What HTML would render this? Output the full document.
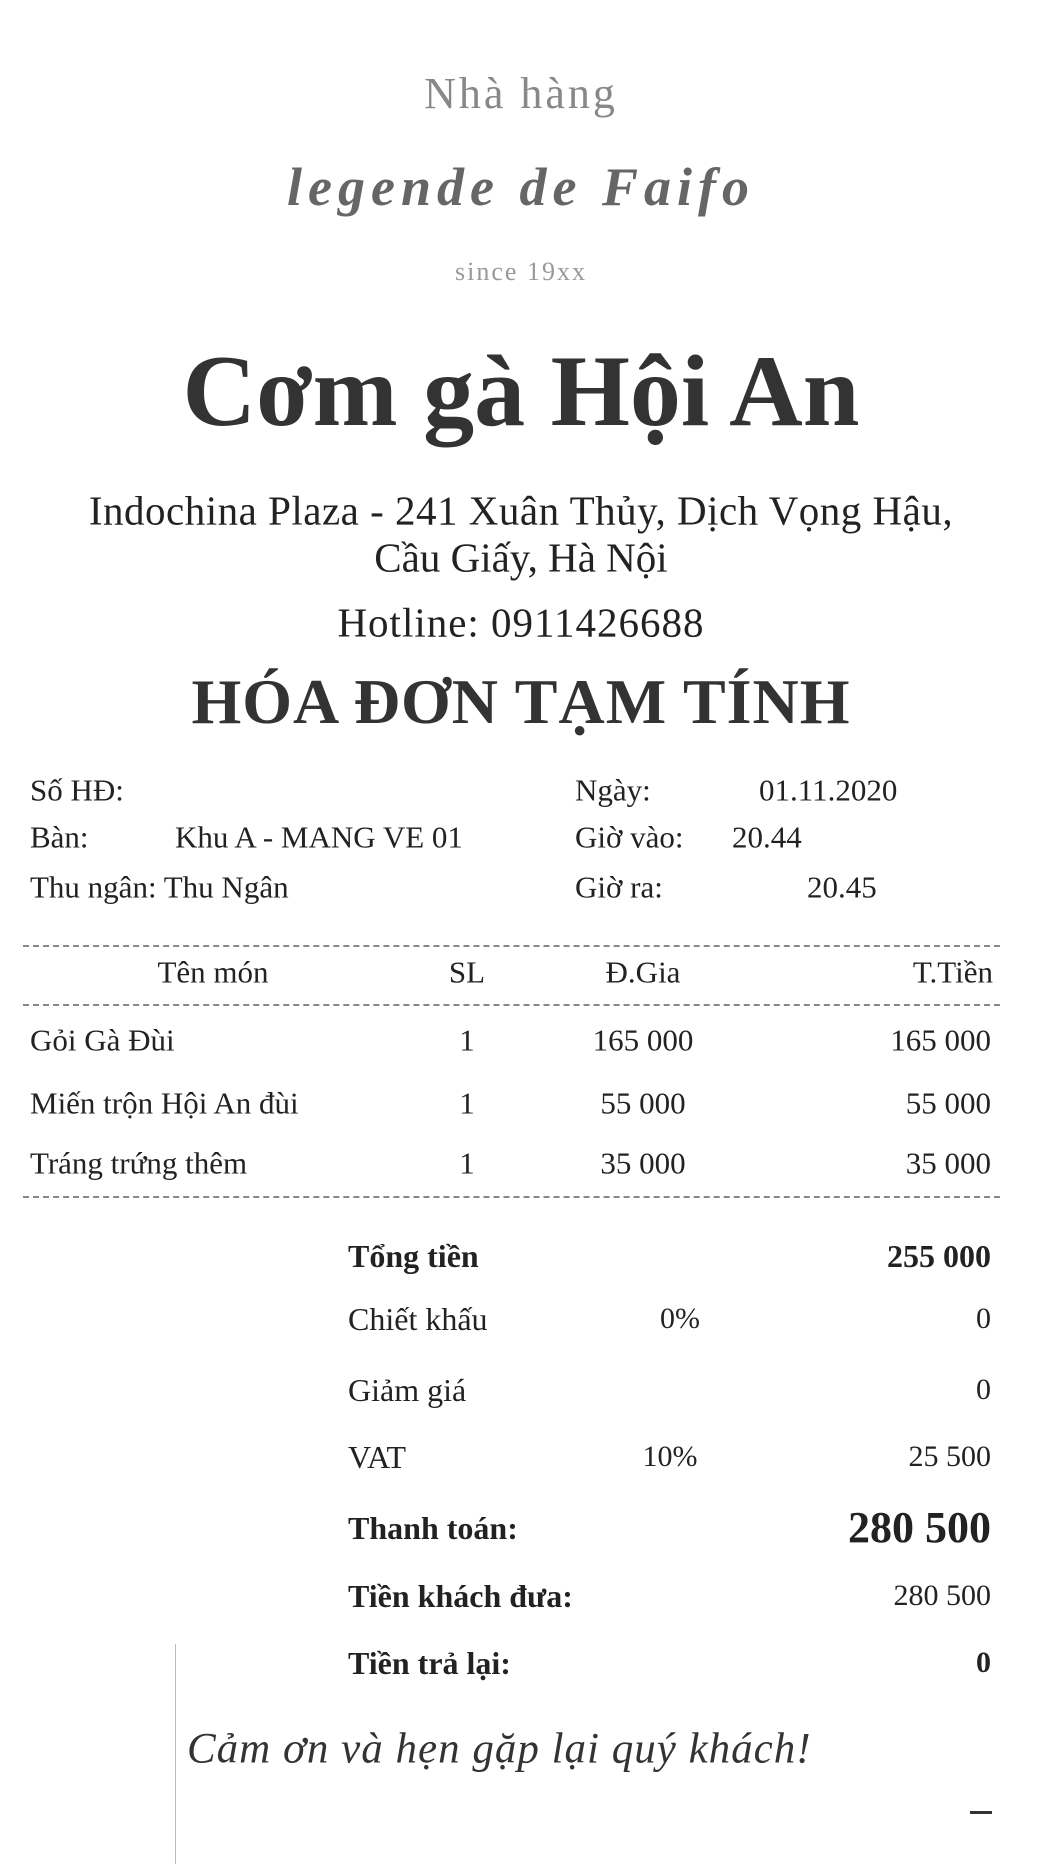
<!DOCTYPE html>
<html><head><meta charset="utf-8">
<style>
html,body{margin:0;padding:0;background:#fff;}
body{width:1042px;height:1864px;position:relative;overflow:hidden;font-family:"Liberation Serif",serif;color:#222;}
.t{position:absolute;line-height:1;transform:translateY(-50%);white-space:nowrap;}
.c{left:0;width:1042px;text-align:center;}
.r{text-align:right;}
.dash{position:absolute;left:23px;width:977px;border-top:2px dashed #888;height:0;}
.b{font-weight:bold;}
</style></head><body>
<div class="t c" style="top:94px;font-size:44px;color:#888;letter-spacing:3px;">Nhà hàng</div>
<div class="t c" style="top:187px;font-size:54px;font-weight:bold;font-style:italic;color:#666;letter-spacing:6px;">legende de Faifo</div>
<div class="t c" style="top:272px;font-size:26px;color:#999;letter-spacing:2px;">since 19xx</div>
<div class="t c b" style="top:392px;font-size:102px;color:#333;">Cơm gà Hội An</div>
<div class="t c" style="top:511px;font-size:41px;letter-spacing:0.5px;">Indochina Plaza - 241 Xuân Thủy, Dịch Vọng Hậu,</div>
<div class="t c" style="top:558px;font-size:41px;">Cầu Giấy, Hà Nội</div>
<div class="t c" style="top:623px;font-size:41px;letter-spacing:1px;">Hotline: 0911426688</div>
<div class="t c b" style="top:702px;font-size:64px;color:#333;letter-spacing:1px;">HÓA ĐƠN TẠM TÍNH</div>

<div class="t" style="top:790px;left:30px;font-size:31px;">Số HĐ:</div>
<div class="t" style="top:837px;left:30px;font-size:31px;">Bàn:</div>
<div class="t" style="top:837px;left:175px;font-size:31px;">Khu A - MANG VE 01</div>
<div class="t" style="top:887px;left:30px;font-size:31px;">Thu ngân: Thu Ngân</div>
<div class="t" style="top:790px;left:575px;font-size:31px;">Ngày:</div>
<div class="t" style="top:790px;left:759px;font-size:31px;">01.11.2020</div>
<div class="t" style="top:837px;left:575px;font-size:31px;">Giờ vào:</div>
<div class="t" style="top:837px;left:732px;font-size:31px;">20.44</div>
<div class="t" style="top:887px;left:575px;font-size:31px;">Giờ ra:</div>
<div class="t" style="top:887px;left:807px;font-size:31px;">20.45</div>

<div class="dash" style="top:945px;"></div>
<div class="t" style="top:972px;left:113px;width:200px;text-align:center;font-size:31px;">Tên món</div>
<div class="t" style="top:972px;left:417px;width:100px;text-align:center;font-size:31px;">SL</div>
<div class="t" style="top:972px;left:563px;width:160px;text-align:center;font-size:31px;">Đ.Gia</div>
<div class="t r" style="top:972px;right:49px;font-size:31px;">T.Tiền</div>
<div class="dash" style="top:1004px;"></div>

<div class="t" style="top:1040px;left:30px;font-size:31px;">Gỏi Gà Đùi</div>
<div class="t" style="top:1040px;left:417px;width:100px;text-align:center;font-size:31px;">1</div>
<div class="t" style="top:1040px;left:563px;width:160px;text-align:center;font-size:31px;">165 000</div>
<div class="t r" style="top:1040px;right:51px;font-size:31px;">165 000</div>
<div class="t" style="top:1103px;left:30px;font-size:31px;">Miến trộn Hội An đùi</div>
<div class="t" style="top:1103px;left:417px;width:100px;text-align:center;font-size:31px;">1</div>
<div class="t" style="top:1103px;left:563px;width:160px;text-align:center;font-size:31px;">55 000</div>
<div class="t r" style="top:1103px;right:51px;font-size:31px;">55 000</div>
<div class="t" style="top:1163px;left:30px;font-size:31px;">Tráng trứng thêm</div>
<div class="t" style="top:1163px;left:417px;width:100px;text-align:center;font-size:31px;">1</div>
<div class="t" style="top:1163px;left:563px;width:160px;text-align:center;font-size:31px;">35 000</div>
<div class="t r" style="top:1163px;right:51px;font-size:31px;">35 000</div>
<div class="dash" style="top:1196px;"></div>

<div class="t b" style="top:1256px;left:348px;font-size:32px;">Tổng tiền</div>
<div class="t r b" style="top:1256px;right:51px;font-size:32px;">255 000</div>
<div class="t" style="top:1319px;left:348px;font-size:32px;">Chiết khấu</div>
<div class="t" style="top:1319px;left:640px;width:80px;text-align:center;font-size:30px;">0%</div>
<div class="t r" style="top:1319px;right:51px;font-size:30px;">0</div>
<div class="t" style="top:1390px;left:348px;font-size:32px;">Giảm giá</div>
<div class="t r" style="top:1390px;right:51px;font-size:30px;">0</div>
<div class="t" style="top:1457px;left:348px;font-size:32px;">VAT</div>
<div class="t" style="top:1457px;left:630px;width:80px;text-align:center;font-size:30px;">10%</div>
<div class="t r" style="top:1457px;right:51px;font-size:30px;">25 500</div>
<div class="t b" style="top:1528px;left:348px;font-size:32px;">Thanh toán:</div>
<div class="t r b" style="top:1528px;right:51px;font-size:44px;">280 500</div>
<div class="t b" style="top:1596px;left:348px;font-size:32px;">Tiền khách đưa:</div>
<div class="t r" style="top:1596px;right:51px;font-size:30px;">280 500</div>
<div class="t b" style="top:1663px;left:348px;font-size:32px;">Tiền trả lại:</div>
<div class="t r b" style="top:1663px;right:51px;font-size:30px;">0</div>

<div style="position:absolute;left:175px;top:1644px;width:1px;height:220px;background:#bbb;"></div>
<div class="t" style="top:1749px;left:187px;font-size:43px;font-style:italic;color:#333;letter-spacing:1px;">Cảm ơn và hẹn gặp lại quý khách!</div>
<div style="position:absolute;left:970px;top:1811px;width:22px;height:3px;background:#333;"></div>
</body></html>
